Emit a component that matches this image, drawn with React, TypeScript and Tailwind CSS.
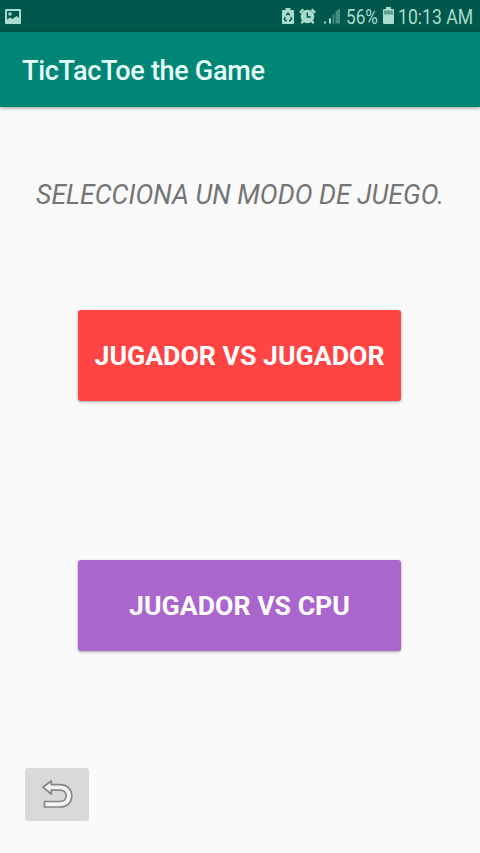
const modes = [
  { label: "JUGADOR VS JUGADOR", color: "bg-[#ff4444]" },
  { label: "JUGADOR VS CPU", color: "bg-[#aa66cc]" },
];

const PictureIcon = () => (
  <svg width="16" height="15" viewBox="0 0 16 15" fill="#a9dccf">
    <path
      fillRule="evenodd"
      d="M1 0h14a1 1 0 0 1 1 1v13a1 1 0 0 1-1 1H1a1 1 0 0 1-1-1V1a1 1 0 0 1 1-1ZM2 2v8.500l3-2 2.500 1.500L11.500 7 14 9V2ZM3.500 3.500h3v3h-3Z"
    />
  </svg>
);

const BatterySaverIcon = () => (
  <svg width="12" height="16" viewBox="0 0 12 16">
    <path d="M3.500 0h5v2H11a1 1 0 0 1 1 1v12a1 1 0 0 1-1 1H1a1 1 0 0 1-1-1V3a1 1 0 0 1 1-1h2.500Z" fill="#a9dccf" />
    <path
      d="M4.200 7.200 6 5l1.800 2.200M8.700 9l1 2-1.400 1.500H7M5 12.500H3.300L2.300 11l1-2"
      fill="none"
      stroke="#00574b"
      strokeWidth="1.400"
    />
  </svg>
);

const AlarmIcon = () => (
  <svg width="17" height="16" viewBox="0 0 17 16" fill="none" stroke="#a9dccf">
    <path d="M.9 4.800 4.300 1.200M16.100 4.800 12.700 1.200M4 13 2.500 15.300M13 13l1.500 2.300" strokeWidth="2.400" />
    <circle cx="8.500" cy="8.500" r="6.800" fill="#a9dccf" stroke="none" />
    <path d="M8.300 4.500V9h3.500" stroke="#00574b" strokeWidth="1.400" />
  </svg>
);

const SignalIcon = () => (
  <svg width="16" height="16" viewBox="0 0 16 16" fill="#a9dccf">
    <path d="M0 13.500h2v2H0ZM5 10.500h2v5H5Z" />
    <path d="M8.500 6.500h2v9h-2ZM11.500 3.500 16 .5v15h-4.500Z" opacity=".4" />
  </svg>
);

const BatteryIcon = () => (
  <svg width="11" height="17" viewBox="0 0 11 17" fill="#a9dccf">
    <path d="M3 0h5v2h2a1 1 0 0 1 1 1v13a1 1 0 0 1-1 1H1a1 1 0 0 1-1-1V3a1 1 0 0 1 1-1h2Z" />
    <path d="M1 3.500h9V7.500H1Z" fill="#5d9c8e" />
  </svg>
);

const UndoIcon = () => (
  <svg width="33" height="29" viewBox="0 0 33 29">
    <path
      d="M1.800 7.200 10.300 1V4.600H19C26 4.600 30.800 9.300 30.800 15.800S26 27 19 27H3.500V21.500H19C22.700 21.500 25.200 19.200 25.200 15.800S22.700 10.100 19 10.100H10.300V14Z"
      fill="#f3f3f3"
      stroke="#858585"
      strokeWidth="1.700"
      strokeLinejoin="round"
    />
  </svg>
);

const StatusBar = () => (
  <div className="flex h-8 items-center bg-[#00574b] pl-[5px] text-[#a9dccf]">
    <PictureIcon />
    <div className="ml-auto flex items-center">
      <BatterySaverIcon />
      <div className="ml-[5px]">
        <AlarmIcon />
      </div>
      <div className="ml-[8px]">
        <SignalIcon />
      </div>
      <svg className="ml-[6px] overflow-visible" width="33" height="32">
        <text x="0" y="23.500" fontSize="19.500" fill="currentColor" textLength="32" lengthAdjust="spacingAndGlyphs">
          56%
        </text>
      </svg>
      <div className="mb-[1px] ml-[4px]">
        <BatteryIcon />
      </div>
      <svg className="ml-[4px] overflow-visible" width="82" height="32">
        <text x="0" y="23.500" fontSize="19.500" fill="currentColor" textLength="75" lengthAdjust="spacingAndGlyphs">
          10:13 AM
        </text>
      </svg>
    </div>
  </div>
);

const App = () => {
  return (
    <div className="flex h-[853px] w-[480px] flex-col bg-[#fafafa] font-['Roboto',sans-serif]">
      <StatusBar />
      <header className="flex h-[75px] items-center bg-[#008577] pt-[3px] pl-[22px] shadow-[0_1px_4px_rgba(0,0,0,0.4)]">
        <h1 className="text-[27px] font-medium tracking-[-0.3px] whitespace-nowrap text-[#e6fff9]">
          TicTacToe the Game
        </h1>
      </header>

      <main className="flex flex-1 flex-col">
        <p className="mt-[68px] h-10 text-center text-[26.700px] leading-10 whitespace-nowrap text-[#757575] italic">
          SELECCIONA UN MODO DE JUEGO.
        </p>

        <div className="mt-[95px] ml-[78px] flex flex-col items-start gap-[159px]">
          {modes.map((mode) => (
            <button
              key={mode.label}
              className={`h-[91px] w-[323px] rounded-[3px] pt-[2px] text-[26.700px] font-bold whitespace-nowrap text-white shadow-[0_1px_3px_rgba(0,0,0,0.35)] ${mode.color}`}
            >
              {mode.label}
            </button>
          ))}
        </div>

        {/* Back */}
        <button
          aria-label="Volver"
          className="mt-auto mb-8 ml-[25px] flex h-[53px] w-16 items-center justify-center self-start rounded-[3px] bg-[#d8d9d9]"
        >
          <UndoIcon />
        </button>
      </main>
    </div>
  );
};

export default App;
